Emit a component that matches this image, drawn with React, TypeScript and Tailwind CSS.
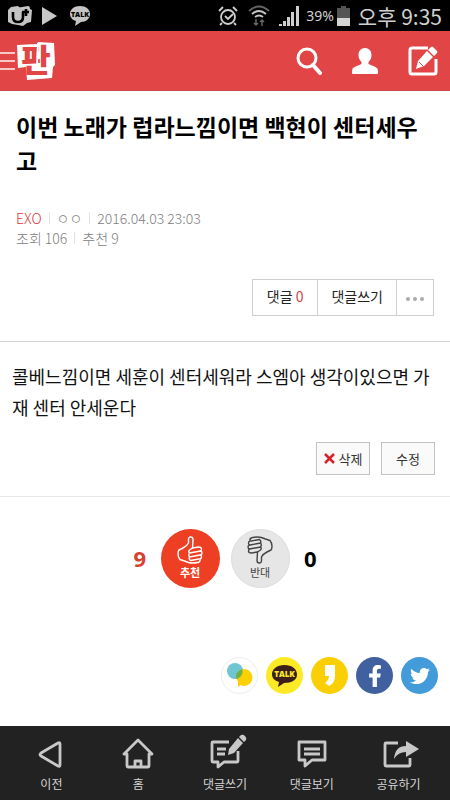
import * as React from "react"
import { FaFacebookF, FaTwitter } from "react-icons/fa"

const FONT = "font-['Noto_Sans_CJK_KR','Noto_Sans',sans-serif]"

// ============================================================================
// STATUS BAR
// ============================================================================

function StatusBar() {
    return (
        <div className="flex h-[31px] items-center justify-between bg-black px-2 text-[#d0d0d0]">
            <div className="flex items-center gap-[10px]">
                <svg width="24" height="20" viewBox="0 0 24 20">
                    <path d="M3 1 10 0q1 2 4 1l6-1q2 0 2 3l2 1-1 12-4 1-4 3-5-1-6-1-4-2V4Z" fill="#c4c4c4" />
                    <path d="M5 6v5q0 5 5 5t5-5V6M14 6h7M18 3v7" fill="none" stroke="#000" strokeWidth="2.6" />
                </svg>
                <svg width="15" height="18" viewBox="0 0 15 18">
                    <path d="M0 0 15 9 0 18Z" fill="#c8c8c8" />
                </svg>
                <svg width="22" height="20" viewBox="0 0 22 20" className="ml-[2px]">
                    <path d="M11 0c6 0 10 3.500 10 8s-4 8-9 8l-6 4 1-5C3 14 1 11 1 8c0-4.500 4-8 10-8Z" fill="#c4c4c4" />
                    <text x="11" y="11" textAnchor="middle" fontSize="7" fontWeight="900" fontFamily="Open Sans" fill="#000">TALK</text>
                </svg>
            </div>

            <div className="flex items-center">
                <svg width="20" height="20" viewBox="0 0 20 20" fill="none" stroke="#cfcfcf" strokeWidth="1.8">
                    <circle cx="10" cy="11" r="7" />
                    <path d="m1 5 4-4M19 5l-4-4M4 17l-2 2M16 17l2 2M7 10l3 3 5-5" />
                </svg>
                <svg width="22" height="22" viewBox="0 0 22 22" fill="none" strokeWidth="1.8" className="ml-[10px]">
                    <path d="M1 6Q11-3 21 6" stroke="#666" />
                    <path d="M4 9q7-6 14 0M7 12q4-3 8 0" stroke="#c8c8c8" />
                    <path d="M8 14v6M6 18l2 2 2-2M14 21v-6M12 17l2-2 2 2" stroke="#666" strokeWidth="1.5" />
                </svg>
                <svg width="21" height="20" viewBox="0 0 21 20" fill="#cfcfcf" className="ml-[9px]">
                    <path d="M0 18h3v2H0zM4 15h3v5H4zM8 11h3v9H8zM12 6h3v14h-3zM17 0h3v20h-3z" />
                </svg>
                <span className="ml-[6px] font-['Noto_Sans',sans-serif] text-[14px] leading-5">39%</span>
                <svg width="13" height="20" viewBox="0 0 13 20" className="ml-[3px]">
                    <path d="M4 0h5v2h4v18H0V2h4Z" fill="#555" />
                    <path d="M0 12h13v8H0Z" fill="#d4d4d4" />
                </svg>
                <span className="ml-[8px] text-[21px] leading-6">오후 9:35</span>
            </div>
        </div>
    )
}

// ============================================================================
// HEADER
// ============================================================================

function Header() {
    return (
        <header className="flex h-[60px] items-center justify-between border-b border-[#c94a4a] bg-[#e24545] pr-3">
            <div className="flex items-center gap-[2px]">
                <button aria-label="메뉴">
                    <svg width="15" height="20" viewBox="0 0 15 20" stroke="#f6c9c6" strokeWidth="2">
                        <path d="M0 2h15M0 10h15M0 18h15" />
                    </svg>
                </button>
                <a href="#" aria-label="판">
                    <svg width="38" height="38" viewBox="0 0 38 38" className="overflow-visible">
                        <path d="m0 3 20-1 1-2 16 1 1 22-2 2-1 11-25 2-1-13-8 1Z" fill="#fff" />
                        <text x="19" y="30" textAnchor="middle" fontSize="32" fontWeight="900" fontFamily="Noto Sans CJK KR" fill="#e24545">판</text>
                        <path d="m21 1-1 23" stroke="#fff" strokeWidth="2" />
                    </svg>
                </a>
            </div>
            <div className="flex items-center gap-[30px]">
                <button aria-label="검색">
                    <svg width="26" height="28" viewBox="0 0 26 28" fill="none" stroke="#fff">
                        <circle cx="11" cy="11" r="9" strokeWidth="3" />
                        <path d="m17 18 7 8" strokeWidth="4" strokeLinecap="round" />
                    </svg>
                </button>
                <button aria-label="내 정보">
                    <svg width="26" height="26" viewBox="0 0 26 26" fill="#fff">
                        <path d="M13 0c4 0 6.500 3 6.500 7 0 3-1 5-3 7v2l7 3q2.500 1 2.500 4v2q0 1-1 1H1q-1 0-1-1v-2q0-3 2.500-4l7-3v-2c-2-2-3-4-3-7 0-4 2.500-7 6.500-7Z" />
                    </svg>
                </button>
                <button aria-label="글쓰기">
                    <svg width="30" height="30" viewBox="0 0 30 30">
                        <path d="M20 2H4Q2 2 2 4v22q0 2 2 2h22q2 0 2-2V13" fill="none" stroke="#fff" strokeWidth="3" />
                        <path d="m8 23 2-8L19 5l6 6-9 9ZM20 4l3-3q1-1 2 0l4 4q1 1 0 2l-3 3Z" fill="#fff" />
                        <path d="m11 16 4 4" stroke="#e24545" />
                    </svg>
                </button>
            </div>
        </header>
    )
}

// ============================================================================
// POST
// ============================================================================

function Divider() {
    return <span className="h-3 w-px bg-[#e2e2e2]" />
}

function PostHeader() {
    return (
        <section className="border-b border-[#d4d4d4] px-4 pt-[18px] pb-[25px]">
            <h1 className="text-[23px] leading-[34px] font-bold text-black">이번 노래가 럽라느낌이면 백현이 센터세우고</h1>
            <div className="mt-[31px] text-[14px] leading-5 font-light text-[#808080]">
                <div className="flex items-center gap-[7px]">
                    <a href="#" className="text-[#d8343c]">EXO</a>
                    <Divider />
                    <span>ㅇㅇ</span>
                    <Divider />
                    <span>2016.04.03 23:03</span>
                </div>
                <div className="flex items-center gap-[7px]">
                    <span>조회 106</span>
                    <Divider />
                    <span>추천 9</span>
                </div>
            </div>
            <div className="mt-[31px] flex justify-end">
                <div className="flex h-[37px] divide-x divide-[#d0d0d0] border border-[#cfcfcf] text-[14px] leading-5 text-[#222]">
                    <button className="px-[14px] pb-1">댓글 <span className="text-[#d0424a]">0</span></button>
                    <button className="px-[13px] pb-1">댓글쓰기</button>
                    <button aria-label="더보기" className="px-2">
                        <svg width="20" height="6" viewBox="0 0 20 6" fill="#aaa">
                            <circle cx="3" cy="4" r="2" />
                            <circle cx="10" cy="4" r="2" />
                            <circle cx="17" cy="4" r="2" />
                        </svg>
                    </button>
                </div>
            </div>
        </section>
    )
}

function PostBody() {
    return (
        <section className="border-b border-[#e8e8e8] px-3 pt-[19px] pb-[21px]">
            <p className="text-[18px] leading-[31px] text-[#111]">콜베느낌이면 세훈이 센터세워라 스엠아 생각이있으면 가재 센터 안세운다</p>
            <div className="mt-[19px] flex justify-end gap-[11px] pr-[3px] text-[13px] text-[#333]">
                <button className="flex h-[33px] w-[54px] items-center justify-center gap-1 border border-[#c2c2c2] bg-[#fafafa]">
                    <svg width="11" height="11" viewBox="0 0 11 11" stroke="#d8232a" strokeWidth="2.5">
                        <path d="m1 1 9 9M10 1l-9 9" />
                    </svg>
                    삭제
                </button>
                <button className="h-[33px] w-[54px] border border-[#c2c2c2] bg-[#fafafa]">수정</button>
            </div>
        </section>
    )
}

// ============================================================================
// VOTE
// ============================================================================

function Thumb({ down = false }: { down?: boolean }) {
    return (
        <svg width="26" height="28" viewBox="0 0 26 28" fill="none" stroke="currentColor" strokeWidth="1.4" strokeLinejoin="round" strokeLinecap="round" className={down ? "rotate-180" : ""}>
            <path d="M11.500 7V3.500Q11.500 1 13.700 1T16 3.500L15.500 12l6-1q3 0 3 2 0 1.500-1 2 1.500.5 1.500 2t-1.500 2q1 .5 1 2t-1.500 2q.5 3-2.500 3.500-5 1-9 0L7.500 25 3 23.500Q1 21 1 18t1-4l4-2q4-2 5.500-5Z" />
            <path d="m15.500 12-3 2q-1.500 1.500 0 3l11-2M12.500 17q-1.500 2 0 4l10.500-2M12.500 21q-1 2 1 3.500L22 23" />
        </svg>
    )
}

function Vote() {
    return (
        <section className="flex items-center justify-center pt-8 text-[22px] font-bold">
            <span className="w-[27px] font-['Open_Sans',sans-serif] text-[#d8412f]">9</span>
            <button className="flex size-[59px] flex-col items-center rounded-full bg-[#ec3f24] pt-[7px] text-[11px] leading-4 text-white">
                <Thumb />
                추천
            </button>
            <button className="ml-[11px] flex size-[59px] flex-col items-center rounded-full border border-[#dcdcdc] bg-[#e6e6e6] pt-[6px] text-[11px] leading-4 font-normal text-[#444]">
                <Thumb down />
                반대
            </button>
            <span className="w-[27px] text-right font-['Open_Sans',sans-serif] text-black">0</span>
        </section>
    )
}

// ============================================================================
// SHARE
// ============================================================================

function Share() {
    return (
        <section className="flex justify-end gap-2 pt-[69px] pr-3 pb-8">
            <button aria-label="돌직구" className="flex size-[37px] items-center justify-center rounded-full border border-[#eee] bg-white">
                <svg width="27" height="25" viewBox="0 0 27 25">
                    <circle cx="9" cy="8" r="8" fill="#70c5d3" />
                    <path d="M18 6a8.500 8.500 0 0 1 0 17q-2 0-3-1l-3 2v-5A8.500 8.500 0 0 1 18 6Z" fill="#fdd003" />
                    <path d="M16.500 6.200Q17.500 14 10 16 9 8 16.500 6.200Z" fill="#73b143" />
                </svg>
            </button>
            <button aria-label="카카오톡" className="flex size-[37px] items-center justify-center rounded-full bg-[#fcea26]">
                <svg width="27" height="24" viewBox="0 0 27 24">
                    <path d="M13.500 1C21 1 26 5 26 10.500S21 19 13 19l-6 4 1-5q-7-2-7-7.500C1 5 6 1 13.500 1Z" fill="#3a1f1a" />
                    <text x="13.500" y="13" textAnchor="middle" fontSize="8" fontWeight="800" fontFamily="Open Sans" fill="#fcea26">TALK</text>
                </svg>
            </button>
            <button aria-label="카카오스토리" className="flex size-[37px] items-center justify-center rounded-full bg-[#fbcf05]">
                <svg width="12" height="21" viewBox="0 0 12 21">
                    <path d="M1 0h10v11q0 7-6 10l-4-3q4-3 4-7H1Z" fill="#fff" />
                </svg>
            </button>
            <button aria-label="페이스북" className="flex size-[37px] items-center justify-center rounded-full bg-[#40609f] text-[22px] text-white">
                <FaFacebookF />
            </button>
            <button aria-label="트위터" className="flex size-[37px] items-center justify-center rounded-full bg-[#439cd9] text-[20px] text-white">
                <FaTwitter />
            </button>
        </section>
    )
}

// ============================================================================
// BOTTOM NAV
// ============================================================================

const NAV_ITEMS: { label: string; icon: React.ReactNode }[] = [
    { label: "이전", icon: <path d="M27 6v21q0 2-2 1L8 18q-2-1.500 0-3L25 5q2-1 2 1Z" /> },
    {
        label: "홈",
        icon: (
            <>
                <path d="M7 16v12q0 1 1 1h20q1 0 1-1V16h3L18 2 4 16Z" />
                <path d="M15 29v-6h6v6" />
            </>
        ),
    },
    {
        label: "댓글쓰기",
        icon: (
            <>
                <path d="M22 4H6Q5 4 5 5v18q0 1 1 1h5v5l6-5h13q1 0 1-1V13M10 11h9M10 16h8" />
                <path d="m21 17 1-6L31 0l5 5-9 10ZM32-1l2-2q2-1 4 1t1 4l-2 2Z" fill="#c8c8c8" stroke="none" />
            </>
        ),
    },
    { label: "댓글보기", icon: <path d="M5 4h26v18H18l-7 6v-6H5ZM10 11h16M10 16h16" /> },
    {
        label: "공유하기",
        icon: (
            <>
                <path d="M17 5H5q-1 0-1 1v21q0 1 1 1h23q1 0 1-1v-7" />
                <path d="M13 21Q14 8 25 8V3l13 8-13 8v-5q-8 0-12 7Z" fill="#c8c8c8" stroke="none" />
            </>
        ),
    },
]

function BottomNav() {
    return (
        <nav className="mt-auto grid h-[74px] grid-cols-5 bg-[#222] px-2">
            {NAV_ITEMS.map((item) => (
                <button key={item.label} className="flex flex-col items-center gap-1 pt-3 text-[12px] leading-5 text-[#d6d6d6]">
                    <svg width="36" height="32" viewBox="0 0 36 32" fill="none" stroke="#c8c8c8" strokeWidth="2.8" strokeLinejoin="round" className="overflow-visible">
                        {item.icon}
                    </svg>
                    {item.label}
                </button>
            ))}
        </nav>
    )
}

export default function App() {
    return (
        <div className={`flex min-h-screen flex-col bg-white ${FONT}`}>
            <StatusBar />
            <Header />
            <main>
                <PostHeader />
                <PostBody />
                <Vote />
                <Share />
            </main>
            <BottomNav />
        </div>
    )
}
